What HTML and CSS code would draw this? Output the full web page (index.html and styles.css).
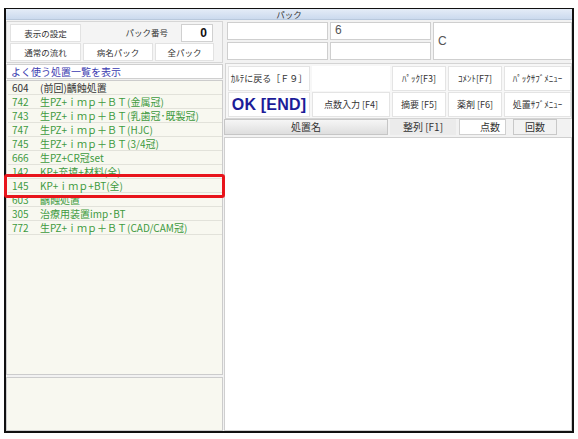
FILE: index.html
```html
<!DOCTYPE html>
<html lang="ja">
<head>
<meta charset="utf-8">
<link rel="stylesheet" href="styles.css">
</head>
<body>
<div class="window">
  <div class="titlebar">パック</div>
  <div class="content">
    <div class="leftcol">
      <div class="toppanel">
        <div class="trow">
          <div class="btn w71">表示の設定</div>
          <div class="label">パック番号</div>
          <div class="numbox">0</div>
        </div>
        <div class="trow">
          <div class="btn w71">通常の流れ</div>
          <div class="btn w70">病名パック</div>
          <div class="btn w59">全パック</div>
        </div>
      </div>
      <div class="listhead">よく使う処置一覧を表示</div>
      <div class="list">
        <div class="item dark"><span class="no">604</span><span>(前回)齲蝕処置</span></div>
        <div class="item"><span class="no">742</span><span>生PZ+ｉｍｐ＋ＢＴ(金属冠)</span></div>
        <div class="item"><span class="no">743</span><span>生PZ+ｉｍｐ＋ＢＴ(乳歯冠･既製冠)</span></div>
        <div class="item"><span class="no">747</span><span>生PZ+ｉｍｐ＋ＢＴ(HJC)</span></div>
        <div class="item"><span class="no">745</span><span>生PZ+ｉｍｐ＋ＢＴ(3/4冠)</span></div>
        <div class="item"><span class="no">666</span><span>生PZ+CR冠set</span></div>
        <div class="item"><span class="no">142</span><span>KP+充填+材料(全)</span></div>
        <div class="item"><span class="no">145</span><span>KP+ｉｍｐ+BT(全)</span></div>
        <div class="item"><span class="no">603</span><span>齲蝕処置</span></div>
        <div class="item"><span class="no">305</span><span>治療用装置imp･BT</span></div>
        <div class="item"><span class="no">772</span><span>生PZ+ｉｍｐ＋ＢＴ(CAD/CAM冠)</span></div>
      </div>
      <div class="bottompanel"></div>
    </div>
    <div class="rightcol">
      <div class="infoboxes">
        <div class="ibox a1"></div>
        <div class="ibox b1">6</div>
        <div class="ibox c">C</div>
        <div class="ibox a2"></div>
        <div class="ibox b2"></div>
      </div>
      <div class="actions">
        <div class="cell">ｶﾙﾃに戻る［Ｆ９］</div>
        <div class="cell empty"></div>
        <div class="cell">ﾊﾟｯｸ[F3]</div>
        <div class="cell">ｺﾒﾝﾄ[F7]</div>
        <div class="cell">ﾊﾟｯｸｻﾌﾞﾒﾆｭｰ</div>
        <div class="cell ok">OK [END]</div>
        <div class="cell">点数入力 [F4]</div>
        <div class="cell">摘要 [F5]</div>
        <div class="cell">薬剤 [F6]</div>
        <div class="cell">処置ｻﾌﾞﾒﾆｭｰ</div>
      </div>
      <div class="colhead">
        <div class="h-name">処置名</div>
        <div class="h-sort">整列 [F1]</div>
        <div class="h-pts">点数</div>
        <div class="h-cnt">回数</div>
      </div>
      <div class="mainlist"></div>
    </div>
  </div>
  <div class="highlight"></div>
</div>
</body>
</html>
```

FILE: styles.css
```css
* { box-sizing: border-box; }
html, body { margin: 0; padding: 0; background: #fff; }
body {
  font-family: "Noto Sans CJK JP", "Noto Sans", sans-serif;
  font-size: 10px;
  color: #333;
}
.window {
  position: relative;
  margin: 8px 0 0 4px;
  width: 570px;
  height: 425px;
  border: 2px solid #111;
  border-top-width: 1px;
  background: #f2f2f2;
  display: flex;
  flex-direction: column;
}
.titlebar {
  height: 11px;
  line-height: 11px;
  font-size: 8.5px;
  text-align: center;
  color: #333;
  background: linear-gradient(#e4ecf7, #cbdaee);
  border-bottom: 1px solid #b8c8dc;
}
.content {
  flex: 1;
  display: grid;
  grid-template-columns: 217px 1fr;
  column-gap: 1px;
  min-height: 0;
}
.leftcol, .rightcol {
  display: flex;
  flex-direction: column;
  min-height: 0;
}
.toppanel {
  margin-top: 1px;
  height: 42px;
  border: 1px solid #d6d6d6;
  background: #f4f4f4;
  padding: 2px 0 0 3px;
  display: flex;
  flex-direction: column;
  gap: 1px;
  font-size: 8.5px;
}
.trow { display: flex; gap: 2px; height: 18px; align-items: stretch; }
.btn {
  background: #fff;
  border: 1px solid #e2e2e2;
  text-align: center;
  line-height: 16px;
  color: #333;
}
.w71 { width: 71px; }
.w70 { width: 70px; }
.w59 { width: 59px; }
.label {
  width: 88px;
  text-align: right;
  line-height: 16px;
  padding-right: 3px;
}
.numbox {
  width: 32px;
  margin-left: 8px;
  background: #fff;
  border: 1px solid #d0d0d0;
  text-align: right;
  padding-right: 5px;
  font-family: "Liberation Sans", sans-serif;
  font-weight: bold;
  font-size: 12px;
  line-height: 17px;
  color: #111;
}
.listhead {
  margin-top: 1px;
  height: 15px;
  background: #fff;
  border: 1px solid #cfcfcf;
  color: #3b3bb0;
  padding-left: 4px;
  line-height: 13px;
  font-size: 10px;
}
.list {
  margin-top: 1px;
  height: 295px;
  background: #f8f8f0;
  border: 1px solid #cccccc;
  padding-left: 1px;
}
.item {
  height: 14px;
  line-height: 13px;
  border-bottom: 1px solid #e2e2da;
  color: #3e9a3e;
  display: flex;
  white-space: nowrap;
}
.item.dark { color: #333; }
.no { width: 32px; padding-left: 4px; }
.bottompanel {
  margin-top: 2px;
  flex: 1;
  background: #f8f8f0;
  border: 1px solid #cccccc;
}
.infoboxes {
  margin-top: 2px;
  padding-left: 3px;
  display: grid;
  grid-template-columns: 101px 101px 1fr;
  grid-template-rows: 18px 18px;
  column-gap: 2px;
  row-gap: 2px;
  height: 39px;
  margin-right: 1px;
}
.ibox {
  background: #fff;
  border: 1px solid #cfcfcf;
  font-family: "Liberation Sans", sans-serif;
  font-size: 12px;
  color: #555;
  padding-left: 4px;
  line-height: 14px;
}
.a1 { grid-column: 1; grid-row: 1; }
.a2 { grid-column: 1; grid-row: 2; }
.b1 { grid-column: 2; grid-row: 1; }
.b2 { grid-column: 2; grid-row: 2; }
.c { grid-column: 3; grid-row: 1 / 3; display: flex; align-items: center; }
.actions {
  margin-top: 2px;
  margin-left: 1px;
  margin-right: 1px;
  height: 56px;
  border: 1px solid #d4d4d4;
  background: #f7f7f7;
  padding: 2px 0 0 2px;
  display: grid;
  grid-template-columns: 82px 78px 54px 54px 67px;
  grid-template-rows: 25px 25px;
  column-gap: 2px;
  row-gap: 1px;
}
.cell {
  background: #fff;
  border: 1px solid #e4e4e4;
  display: flex;
  align-items: center;
  justify-content: center;
  white-space: nowrap;
  font-size: 9px;
  color: #333;
}
.cell.empty { border-color: transparent; }
.cell.ok {
  font-family: "Liberation Sans", sans-serif;
  font-weight: bold;
  font-size: 16px;
  color: #1c1c98;
  letter-spacing: 0.2px;
}
.colhead {
  height: 16px;
  display: flex;
  align-items: stretch;
  font-size: 10px;
}
.h-name {
  width: 164px;
  background: linear-gradient(#f6f6f6, #dedede);
  border: 1px solid #c6c6c6;
  text-align: center;
  line-height: 14px;
}
.h-sort {
  width: 66px;
  margin-left: 2px;
  background: #ebebeb;
  text-align: center;
  line-height: 15px;
}
.h-pts {
  width: 47px;
  margin-left: 3px;
  background: #fff;
  border: 1px solid #d0d0d0;
  text-align: right;
  padding-right: 5px;
  line-height: 14px;
}
.h-cnt {
  width: 44px;
  margin-left: 7px;
  background: #f2f2f2;
  border: 1px solid #c8c8c8;
  text-align: center;
  line-height: 14px;
}
.mainlist {
  margin-top: 2px;
  flex: 1;
  margin-right: 1px;
  background: #fff;
  border: 1px solid #cfcfcf;
}
.highlight {
  position: absolute;
  left: -2px;
  top: 165px;
  width: 221px;
  height: 24px;
  border: 3px solid #e8141b;
  border-radius: 3px;
}
```
